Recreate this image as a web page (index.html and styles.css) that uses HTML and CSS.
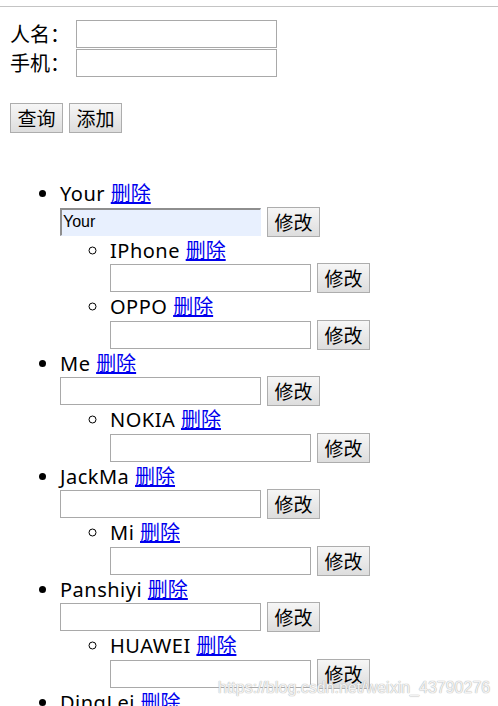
FILE: index.html
```html
<!DOCTYPE html>
<html>
<head>
<meta charset="utf-8">
<link rel="stylesheet" href="styles.css">
</head>
<body>
<div class="topline"></div>
<div class="page">
  <div class="form">
    <div class="frow"><span class="lbl">人名：</span><input class="txt" type="text"></div>
    <div class="frow"><span class="lbl">手机：</span><input class="txt" type="text"></div>
  </div>
  <div class="actions">
    <button class="btn">查询</button><button class="btn">添加</button>
  </div>
  <ul class="list">
    <li>
      <div class="line">Your <a href="#">删除</a></div>
      <div class="edit"><input class="txt filled" type="text" value="Your"><button class="btn">修改</button></div>
      <ul class="sub">
        <li>
          <div class="line">IPhone <a href="#">删除</a></div>
          <div class="edit"><input class="txt" type="text"><button class="btn">修改</button></div>
        </li>
        <li>
          <div class="line">OPPO <a href="#">删除</a></div>
          <div class="edit"><input class="txt" type="text"><button class="btn">修改</button></div>
        </li>
      </ul>
    </li>
    <li>
      <div class="line">Me <a href="#">删除</a></div>
      <div class="edit"><input class="txt" type="text"><button class="btn">修改</button></div>
      <ul class="sub">
        <li>
          <div class="line">NOKIA <a href="#">删除</a></div>
          <div class="edit"><input class="txt" type="text"><button class="btn">修改</button></div>
        </li>
      </ul>
    </li>
    <li>
      <div class="line">JackMa <a href="#">删除</a></div>
      <div class="edit"><input class="txt" type="text"><button class="btn">修改</button></div>
      <ul class="sub">
        <li>
          <div class="line">Mi <a href="#">删除</a></div>
          <div class="edit"><input class="txt" type="text"><button class="btn">修改</button></div>
        </li>
      </ul>
    </li>
    <li>
      <div class="line">Panshiyi <a href="#">删除</a></div>
      <div class="edit"><input class="txt" type="text"><button class="btn">修改</button></div>
      <ul class="sub">
        <li>
          <div class="line">HUAWEI <a href="#">删除</a></div>
          <div class="edit"><input class="txt" type="text"><button class="btn">修改</button></div>
        </li>
      </ul>
    </li>
    <li>
      <div class="line">DingLei <a href="#">删除</a></div>
      <div class="edit"><input class="txt" type="text"><button class="btn">修改</button></div>
    </li>
  </ul>
</div>
<div class="watermark">https://blog.csdn.net/weixin_43790276</div>
</body>
</html>
```
FILE: styles.css
```css
html, body {
  margin: 0;
  padding: 0;
  background: #fff;
  overflow: hidden;
}
body {
  width: 498px;
  height: 706px;
  position: relative;
  font-family: "Noto Sans", "Noto Sans CJK SC", sans-serif;
  font-size: 20px;
  color: #000;
}
.topline {
  margin-top: 6px;
  height: 1px;
  background: #c4c4c4;
}
.page {
  padding-left: 10px;
}
.form {
  padding-top: 12px;
}
.frow {
  display: flex;
  align-items: center;
  height: 29px;
}
.lbl {
  width: 66px;
  line-height: 26px;
  font-family: "Noto Sans CJK SC", sans-serif;
}
.txt {
  box-sizing: border-box;
  width: 201px;
  height: 28px;
  margin: 0;
  padding: 0 2px;
  border: 1px solid #a9a9a9;
  background: #fff;
  font-family: "Liberation Sans", Arial, sans-serif;
  font-size: 16px;
  outline: none;
}
.txt.filled {
  background: #e8f0fe;
  border-style: solid;
  border-width: 2px 1px 1px 2px;
  border-color: #8e8e8e #e8f0fe #e8f0fe #8e8e8e;
  padding-left: 1px;
}
.actions {
  display: flex;
  gap: 6px;
  margin-top: 26px;
}
.btn {
  box-sizing: border-box;
  width: 53px;
  height: 30px;
  margin: 0;
  padding: 0;
  border: 1px solid #adadad;
  border-radius: 0;
  background: linear-gradient(#f6f6f6, #dddddd);
  font-family: "Noto Sans CJK SC", sans-serif;
  font-size: 19px;
  line-height: 26px;
  color: #000;
}
.list {
  margin: 47px 0 0 0;
  padding-left: 50px;
  list-style: disc;
}
.sub {
  margin: 0;
  padding-left: 50px;
  list-style: circle;
}
.line {
  height: 26.5px;
  line-height: 26px;
  white-space: nowrap;
  letter-spacing: 0.5px;
}
.line a {
  color: #0000ee;
  text-decoration: underline;
  font-family: "Noto Sans CJK SC", sans-serif;
  letter-spacing: 0;
}
.edit {
  display: flex;
  align-items: center;
  gap: 6px;
  height: 30px;
}
.watermark {
  position: absolute;
  left: 218px;
  top: 679px;
  font-family: "Liberation Sans", Arial, sans-serif;
  font-size: 16px;
  color: rgba(255, 255, 255, 0.85);
  text-shadow: 0 0 1px #b0b0b0, 0 0 1px #b0b0b0;
  white-space: nowrap;
}
```
